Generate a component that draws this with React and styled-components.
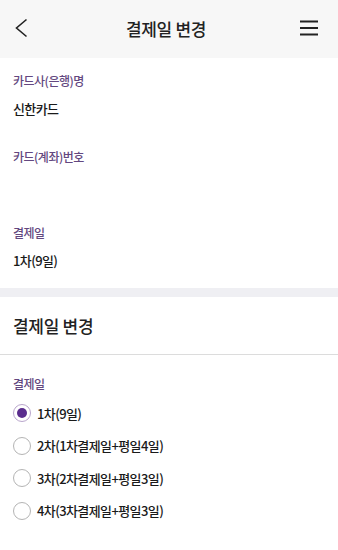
import React from 'react';
import styled, { createGlobalStyle } from 'styled-components';

const GlobalStyle = createGlobalStyle`
    html, body {
        margin: 0;
        padding: 0;
        background: #ffffff;
    }
    body {
        font-family: "Noto Sans CJK KR", "Noto Sans", sans-serif;
        color: #222222;
    }
`;

const Page = styled.div`
    width: 338px;
    min-height: 550px;
    display: flex;
    flex-direction: column;
    background: #ffffff;
`;

const Header = styled.header`
    height: 58px;
    background: #f7f7f7;
    display: grid;
    grid-template-columns: 1fr auto 1fr;
    align-items: center;
    padding: 0 20px 2px 14px;
    box-sizing: border-box;
`;

const Title = styled.h1`
    margin: 0;
    font-size: 17px;
    font-weight: 500;
    color: #222;
    letter-spacing: -0.3px;
`;

const IconButton = styled.button`
    height: 26px;
    padding: 0;
    border: 0;
    background: transparent;
    display: flex;
    align-items: center;
    justify-self: ${props => props.right ? 'end' : 'start'};
`;

const InfoSection = styled.section`
    padding: 13px 13px 17px;
    display: flex;
    flex-direction: column;
`;

const Field = styled.div`
    display: flex;
    flex-direction: column;
    gap: 8px;
    & + & {
        margin-top: 28px;
    }
`;

const Label = styled.div`
    font-size: 12px;
    font-weight: 500;
    line-height: 20px;
    color: #634780;
    letter-spacing: -0.5px;
`;

const Value = styled.div`
    font-size: 13px;
    font-weight: 500;
    line-height: 20px;
    height: 20px;
    color: #1a1a1a;
    letter-spacing: -0.6px;
`;

const Band = styled.div`
    height: 9px;
    background: #efeff3;
`;

const SectionTitle = styled.h2`
    margin: 0;
    height: 56px;
    display: flex;
    align-items: center;
    padding: 0 13px 1px;
    font-size: 17px;
    font-weight: 500;
    color: #222;
    border-bottom: 1px solid #dcdcdc;
    letter-spacing: -0.3px;
`;

const RadioSection = styled.section`
    padding: 19px 13px 23px;
    display: flex;
    flex-direction: column;
    border-bottom: 2px solid #dddddd;
    & > ${Label} {
        margin-bottom: 3px;
    }
`;

const RadioRow = styled.label`
    height: 32.5px;
    display: flex;
    align-items: center;
    gap: 6px;
    font-size: 13px;
    font-weight: 500;
    color: #1a1a1a;
    letter-spacing: -0.6px;
`;

const RadioCircle = styled.span`
    width: 18px;
    height: 18px;
    box-sizing: border-box;
    border-radius: 50%;
    border: 1px solid ${props => props.checked ? '#b9a6cc' : '#b4b4b4'};
    background: #fff;
    display: flex;
    align-items: center;
    justify-content: center;
    flex-shrink: 0;
    &::after {
        content: '';
        width: 10px;
        height: 10px;
        border-radius: 50%;
        background: #5a2d8e;
        display: ${props => props.checked ? 'block' : 'none'};
    }
`;

const options = [
    '1차(9일)',
    '2차(1차결제일+평일4일)',
    '3차(2차결제일+평일3일)',
    '4차(3차결제일+평일3일)',
];

export default function App() {
    const [selected, setSelected] = React.useState(0);
    return (
        <Page>
            <GlobalStyle />
            <Header>
                <IconButton aria-label="back">
                    <svg width="14" height="20" viewBox="0 0 14 20">
                        <path d="M12.5 1.5 L2.5 10 L12.5 18.5" fill="none" stroke="#222" strokeWidth="1.6" />
                    </svg>
                </IconButton>
                <Title>결제일 변경</Title>
                <IconButton aria-label="menu" right>
                    <svg width="18" height="16" viewBox="0 0 18 16">
                        <path d="M0 1.5 H18 M0 8 H18 M0 14.5 H18" stroke="#222" strokeWidth="1.8" />
                    </svg>
                </IconButton>
            </Header>
            <InfoSection>
                <Field>
                    <Label>카드사(은행)명</Label>
                    <Value>신한카드</Value>
                </Field>
                <Field>
                    <Label>카드(계좌)번호</Label>
                    <Value></Value>
                </Field>
                <Field>
                    <Label>결제일</Label>
                    <Value>1차(9일)</Value>
                </Field>
            </InfoSection>
            <Band />
            <SectionTitle>결제일 변경</SectionTitle>
            <RadioSection>
                <Label>결제일</Label>
                {options.map((opt, i) => (
                    <RadioRow key={opt} onClick={() => setSelected(i)}>
                        <RadioCircle checked={selected === i} />
                        {opt}
                    </RadioRow>
                ))}
            </RadioSection>
        </Page>
    );
}
